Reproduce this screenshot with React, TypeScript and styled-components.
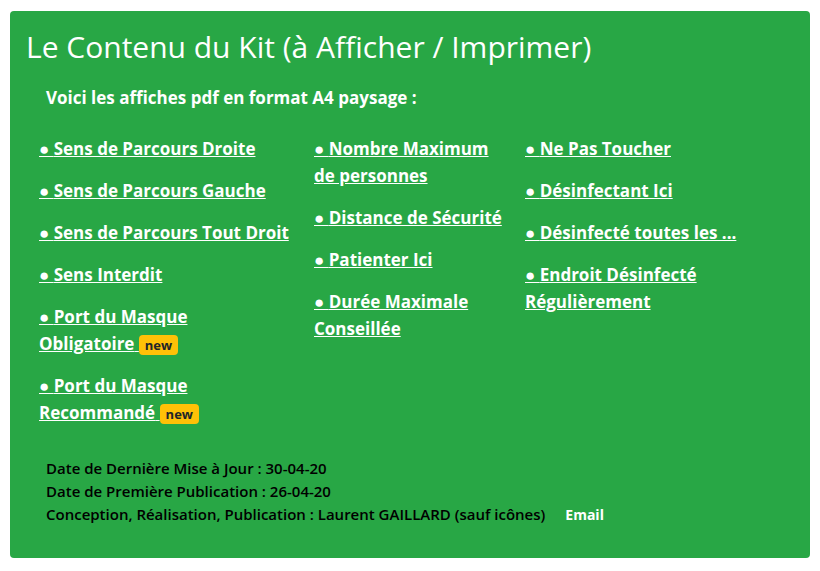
import React from "react";
import styled, { createGlobalStyle } from "styled-components";

const GlobalStyle = createGlobalStyle`
  * { box-sizing: border-box; }
  body {
    margin: 0;
    background: #fff;
    font-family: "Segoe UI", "Open Sans", "Noto Sans", sans-serif;
  }
`;

const Card = styled.section`
  margin: 11px 10px 12px;
  padding: 16px 16px 32px;
  border-radius: 4px;
  background: #28a745;
  color: #fff;
`;

const Title = styled.h1`
  margin: 0;
  font-size: 30px;
  line-height: 40px;
  font-weight: 400;
`;

const Intro = styled.p`
  margin: 18px 20px 24px;
  font-size: 17px;
  line-height: 26px;
  font-weight: 700;
`;

const Columns = styled.div`
  display: flex;
  gap: 16px;
  padding: 0 13px;
`;

const List = styled.ul<{ $width: number }>`
  flex: 0 1 ${(p) => p.$width}px;
  margin: 0;
  padding: 0;
  list-style: none;
`;

const Item = styled.li`
  margin-bottom: 15px;
  font-size: 17px;
  line-height: 27px;
  font-weight: 700;
`;

const PosterLink = styled.a`
  color: #fff;
  text-decoration: underline;
`;

const Badge = styled.span`
  display: inline-block;
  padding: 4px 6px 3px;
  border-radius: 4px;
  background: #ffc107;
  color: #212529;
  font-size: 13px;
  line-height: 13px;
  font-weight: 700;
`;

const Footer = styled.footer`
  margin: 16px 20px 0;
  color: #000;
  font-size: 15px;
  line-height: 23px;
  font-weight: 600;
`;

const Line = styled.div``;

const Email = styled.a`
  margin-left: 20px;
  color: #fff;
  font-size: 14px;
  font-weight: 700;
  text-decoration: none;
`;

type Poster = { lines: string[]; isNew?: boolean };

const columns: { width: number; posters: Poster[] }[] = [
  {
    width: 259,
    posters: [
      { lines: ["Sens de Parcours Droite"] },
      { lines: ["Sens de Parcours Gauche"] },
      { lines: ["Sens de Parcours Tout Droit"] },
      { lines: ["Sens Interdit"] },
      { lines: ["Port du Masque", "Obligatoire"], isNew: true },
      { lines: ["Port du Masque", "Recommandé"], isNew: true },
    ],
  },
  {
    width: 195,
    posters: [
      { lines: ["Nombre Maximum", "de personnes"] },
      { lines: ["Distance de Sécurité"] },
      { lines: ["Patienter Ici"] },
      { lines: ["Durée Maximale", "Conseillée"] },
    ],
  },
  {
    width: 240,
    posters: [
      { lines: ["Ne Pas Toucher"] },
      { lines: ["Désinfectant Ici"] },
      { lines: ["Désinfecté toutes les ..."] },
      { lines: ["Endroit Désinfecté", "Régulièrement"] },
    ],
  },
];

export default function App() {
  return (
    <>
      <GlobalStyle />
      <Card>
        <Title>Le Contenu du Kit (à Afficher / Imprimer)</Title>
        <Intro>Voici les affiches pdf en format A4 paysage :</Intro>
        <Columns>
          {columns.map((column, i) => (
            <List key={i} $width={column.width}>
              {column.posters.map((poster) => (
                <Item key={poster.lines.join(" ")}>
                  <PosterLink href="#">
                    ● {poster.lines[0]}
                    {poster.lines[1] && <><br />{poster.lines[1]}</>}
                    {poster.isNew && <> <Badge>new</Badge></>}
                  </PosterLink>
                </Item>
              ))}
            </List>
          ))}
        </Columns>
        <Footer>
          <Line>Date de Dernière Mise à Jour : 30-04-20</Line>
          <Line>Date de Première Publication : 26-04-20</Line>
          <Line>
            Conception, Réalisation, Publication : Laurent GAILLARD (sauf icônes)
            <Email href="#">Email</Email>
          </Line>
        </Footer>
      </Card>
    </>
  );
}
